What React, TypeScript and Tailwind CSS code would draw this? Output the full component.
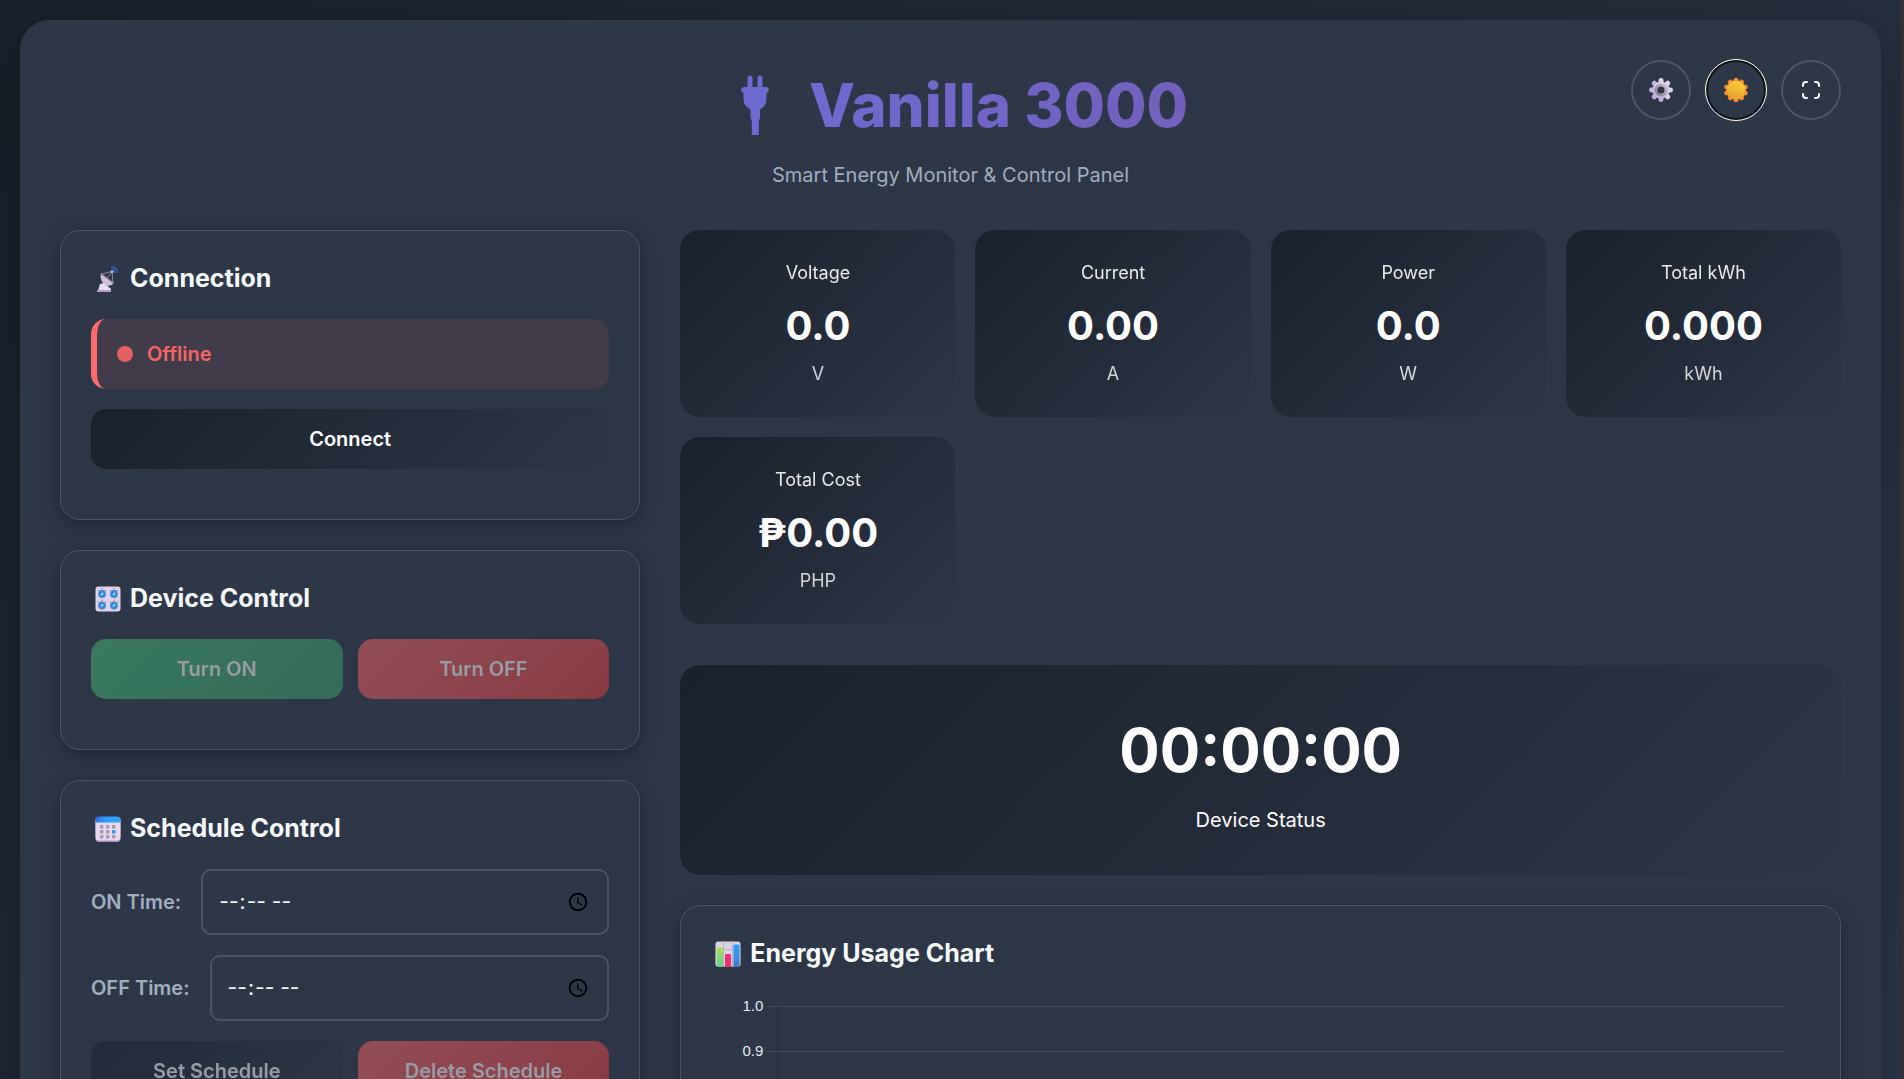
import { useState } from 'react';
import type { ReactNode } from 'react';

const STATS = [
  { label: 'Voltage', value: '0.0', unit: 'V' },
  { label: 'Current', value: '0.00', unit: 'A' },
  { label: 'Power', value: '0.0', unit: 'W' },
  { label: 'Total kWh', value: '0.000', unit: 'kWh' },
  { label: 'Total Cost', value: '₱0.00', unit: 'PHP' },
];

const TICKS = ['1.0', '0.9'];
const GEAR_TEETH = [0, 45, 90, 135];
const SUN_RAYS = [0, 36, 72, 108, 144, 180, 216, 252, 288, 324];

function PlugIcon() {
  return (
    <svg viewBox="0 0 28 60" className="h-[60px] w-7" fill="#6d6bd0" aria-hidden="true">
      <path d="M6.500 12V3a2.500 2.500 0 0 1 5 0v9h5V3a2.500 2.500 0 0 1 5 0v9h3.300a3.100 3.100 0 0 1 .7 6.100V24c0 4.500-2 8-6.500 10.300v8.200c0 1-.4 2-1.200 2.700V60h-7V45.200c-.8-.7-1.300-1.700-1.300-2.700v-8.200C5 32 2.500 28.500 2.500 24v-5.900A3.100 3.100 0 0 1 3.200 12z" />
    </svg>
  );
}

function GearIcon() {
  return (
    <svg viewBox="0 0 24 24" className="size-6" aria-hidden="true">
      <defs>
        <linearGradient id="gear" gradientUnits="userSpaceOnUse" x1="18" y1="0" x2="6" y2="24">
          <stop offset="0" stopColor="#e4dcee" />
          <stop offset="1" stopColor="#bba8d5" />
        </linearGradient>
        <linearGradient id="gearRing" x1="1" y1="0" x2="0" y2="1">
          <stop offset="0" stopColor="#c4bccb" />
          <stop offset="1" stopColor="#857c92" />
        </linearGradient>
      </defs>
      {GEAR_TEETH.map((a) => (
        <rect key={a} x="9.500" y="0" width="5" height="24" rx="2.400" fill="url(#gear)" transform={`rotate(${a} 12 12)`} />
      ))}
      <circle cx="12" cy="12" r="8.600" fill="url(#gear)" />
      <circle cx="12" cy="12" r="5" fill="#2d3748" stroke="url(#gearRing)" strokeWidth="3" />
    </svg>
  );
}

function SunIcon() {
  return (
    <svg viewBox="0 0 24 24" className="size-6" aria-hidden="true">
      <defs>
        <linearGradient id="sun" x1="0.700" y1="0" x2="0.300" y2="1">
          <stop offset="0" stopColor="#ffcf3a" />
          <stop offset="1" stopColor="#e0a02c" />
        </linearGradient>
      </defs>
      {SUN_RAYS.map((a) => (
        <circle key={a} cx="12" cy="2.200" r="2.400" fill="#fb8a2e" transform={`rotate(${a} 12 12)`} />
      ))}
      <circle cx="12" cy="12" r="10" fill="#fb8a2e" />
      <circle cx="12" cy="12" r="9.300" fill="url(#sun)" />
    </svg>
  );
}

function FullscreenIcon() {
  return (
    <svg viewBox="0 0 20 20" className="size-5" fill="none" stroke="#f7fafc" strokeWidth="2" strokeLinecap="round" aria-hidden="true">
      <path d="M2 6V5a3 3 0 0 1 3-3h1M14 2h1a3 3 0 0 1 3 3v1M18 14v1a3 3 0 0 1-3 3h-1M6 18H5a3 3 0 0 1-3-3v-1" />
    </svg>
  );
}

function DishIcon() {
  return (
    <svg viewBox="0 0 26 26" className="size-[26px]" aria-hidden="true">
      <path d="M5 18l4-1 7 6v2H3z" fill="#e6deee" />
      <path d="M2 24h14v2H2z" fill="#b39cc8" />
      <path d="M6 7.500C4.500 12 7 18 12 19.500c2.500.7 5-.3 6.500-2.500z" fill="#cfc0d6" />
      <path d="M6 7.500l12.500 9.500" stroke="#8d8096" strokeWidth="1.200" />
      <path d="M6.500 8L17 5.500 18 16.500M12 12l5-6" stroke="#8b8791" strokeWidth="1" fill="none" />
      <circle cx="17" cy="5.800" r="1.400" fill="#d5c9da" />
      <path d="M16 1c4 0 7 2.500 7 6M16.300 3.500c2.500 0 4 1.400 4 3.500" stroke="#2f62c8" strokeWidth="1.300" fill="none" />
    </svg>
  );
}

function KnobsIcon() {
  const knobs = [[7, 8], [19, 8], [7, 19.5], [19, 19.5]];
  return (
    <svg viewBox="0 0 26 26" className="size-[26px]" aria-hidden="true">
      <rect x="0.500" y="0.500" width="25" height="25" rx="3" fill="#e0d3ea" />
      {knobs.map(([x, y]) => (
        <g key={`${x}-${y}`}>
          <path d={`M${x - 4} ${y - 4}l1 1M${x} ${y - 6}v1.500M${x + 4} ${y - 4}l-1 1`} stroke="#6d6476" strokeWidth="0.900" />
          <circle cx={x} cy={y} r="3.900" fill="#3b8ad8" />
          <path d={`M${x - 1} ${y + 1}l2.200-2.200`} stroke="#bfe3ff" strokeWidth="1.200" />
        </g>
      ))}
    </svg>
  );
}

function CalendarIcon() {
  return (
    <svg viewBox="0 0 26 26" className="size-[26px]" aria-hidden="true">
      <defs>
        <linearGradient id="calTop">
          <stop offset="0" stopColor="#2f6be8" />
          <stop offset="0.400" stopColor="#2f9bff" />
          <stop offset="1" stopColor="#35a5fb" />
        </linearGradient>
      </defs>
      <rect x="0.500" y="1.500" width="25" height="24.500" rx="3.500" fill="#b08fc9" />
      <rect x="0.500" y="1" width="25" height="23.500" rx="3.500" fill="#e6d9ee" />
      <path d="M.5 6.500V4A3.500 3.500 0 0 1 4 .5h18A3.500 3.500 0 0 1 25.500 4v2.500z" fill="url(#calTop)" />
      {[9, 14, 19].map((y) =>
        [5, 11, 17].map((x) => (
          <rect key={`${x}-${y}`} x={x} y={y} width="3.400" height="3.400" rx="0.500" fill={x === 17 && y === 14 ? '#3095f2' : '#a698b0'} />
        ))
      )}
    </svg>
  );
}

function BarsIcon() {
  return (
    <svg viewBox="0 0 26 26" className="size-[26px]" aria-hidden="true">
      <defs>
        <linearGradient id="barGreen" x1="0" y1="0" x2="0" y2="1">
          <stop offset="0" stopColor="#a6e24a" />
          <stop offset="1" stopColor="#5bd68c" />
        </linearGradient>
        <linearGradient id="barBlue" x1="0" y1="0" x2="0" y2="1">
          <stop offset="0" stopColor="#2fa3f5" />
          <stop offset="1" stopColor="#3f7bd6" />
        </linearGradient>
      </defs>
      <rect x="0.500" y="0.500" width="25" height="25" rx="2.500" fill="#dcd3e2" />
      <path d="M8.500 0v26M17.500 0v26M0 8.500h26M0 17.500h26" stroke="#bdb0c6" strokeWidth="1" />
      <path d="M2 7.500q0-1 1-1h4q1 0 1 1V26H3q-1 0-1-1z" fill="url(#barGreen)" />
      <path d="M10 14q0-1 1-1h4q1 0 1 1v12h-6z" fill="#ec2f6f" />
      <path d="M18.500 4.500q0-1 1-1h4q1 0 1 1V25l-1 1h-5z" fill="url(#barBlue)" />
    </svg>
  );
}

function Card({ icon, title, children }: { icon: ReactNode; title: string; children: ReactNode }) {
  return (
    <section className="rounded-[20px] border border-[#4a5568] bg-[#2d3748] p-[30px] shadow-[0_5px_20px_rgba(0,0,0,0.3)]">
      <h2 className="mb-[22px] flex h-9 items-center gap-[9px] pl-1 text-[25px] font-bold text-[#f7fafc]">
        {icon}
        {title}
      </h2>
      {children}
    </section>
  );
}

function TimeField({ id, label, value, onChange }: { id: string; label: string; value: string; onChange: (v: string) => void }) {
  return (
    <div className="mb-5 flex items-center gap-5">
      <label htmlFor={id} className="text-xl font-semibold text-[#a0aec0]">{label}</label>
      <input
        id={id}
        type="time"
        value={value}
        onChange={(e) => onChange(e.target.value)}
        className="h-[66px] min-w-0 flex-1 rounded-[10px] border-2 border-[#4a5568] bg-[#2d3748] px-[15px] text-[21px] text-[#f7fafc]"
      />
    </div>
  );
}

const iconButton = 'flex size-[60px] items-center justify-center rounded-full border-2 border-[#4a5568] bg-[#2d3748]';
const button = 'h-[60px] flex-1 rounded-[15px] bg-linear-135 text-xl font-semibold text-white disabled:opacity-50';

export default function App() {
  const [connected, setConnected] = useState(false);
  const [onTime, setOnTime] = useState('');
  const [offTime, setOffTime] = useState('');

  return (
    <div className="h-screen overflow-y-auto border-r-[3px] border-[#323234] bg-linear-135 from-[#1a202c] to-[#2d3748] p-5 font-['Inter',sans-serif] [scrollbar-width:none]">
      <div className="relative rounded-[30px] bg-[#2d3748] p-10 shadow-[0_20px_60px_rgba(0,0,0,0.3)]">
        <div className="absolute top-10 right-10 flex gap-[15px]">
          <button aria-label="Settings" className={iconButton}><GearIcon /></button>
          <button aria-label="Toggle theme" className="flex size-[60px] items-center justify-center rounded-full border-2 border-[#101010] bg-[#2d3748] outline-1 outline-white">
            <SunIcon />
          </button>
          <button aria-label="Fullscreen" className={iconButton}><FullscreenIcon /></button>
        </div>

        <header className="mb-10 flex flex-col items-center text-center">
          <h1 className="mb-2.5 flex h-[90px] items-center text-[60px] font-extrabold">
            <span className="flex w-24 pl-7"><PlugIcon /></span>
            <span className="bg-linear-to-r from-[#6e6acf] to-[#7360bc] bg-clip-text text-transparent">Vanilla 3000</span>
          </h1>
          <p className="text-xl leading-[30px] text-[#a0aec0]">Smart Energy Monitor &amp; Control Panel</p>
        </header>

        <div className="grid grid-cols-[1fr_2fr] items-start gap-10">
          <div className="flex min-w-0 flex-col gap-[30px]">
            <Card icon={<DishIcon />} title="Connection">
              <div className="mb-5 flex h-[70px] items-center gap-3.5 rounded-[15px] border-l-6 border-[#ff6b6b] bg-[#f56565]/10 px-5 text-xl font-semibold text-[#f56565]">
                <span className="size-4 rounded-full bg-[#e36060]" />
                {connected ? 'Online' : 'Offline'}
              </div>
              <div className="mb-5 flex">
                <button onClick={() => setConnected(!connected)} className={`${button} from-[#1a202c] to-[#2d3748]`}>
                  {connected ? 'Disconnect' : 'Connect'}
                </button>
              </div>
            </Card>

            <Card icon={<KnobsIcon />} title="Device Control">
              <div className="mb-5 flex gap-[15px]">
                <button disabled={!connected} className={`${button} from-[#48bb78] to-[#38a169]`}>Turn ON</button>
                <button disabled={!connected} className={`${button} from-[#f56565] to-[#e53e3e]`}>Turn OFF</button>
              </div>
            </Card>

            <Card icon={<CalendarIcon />} title="Schedule Control">
              <TimeField id="on-time" label="ON Time:" value={onTime} onChange={setOnTime} />
              <TimeField id="off-time" label="OFF Time:" value={offTime} onChange={setOffTime} />
              <div className="mb-5 flex gap-[15px]">
                <button disabled={!connected} className={`${button} from-[#1a202c] to-[#2d3748]`}>Set Schedule</button>
                <button disabled={!connected} className={`${button} from-[#f56565] to-[#e53e3e]`}>Delete Schedule</button>
              </div>
            </Card>
          </div>

          <div className="min-w-0">
            <div className="mb-[41px] grid grid-cols-4 gap-5">
              {STATS.map((s) => (
                <div key={s.label} className="rounded-[20px] bg-linear-135 from-[#1a202c] to-[#2d3748] px-5 py-[30px] text-center text-white">
                  <div className="text-lg leading-[26px] opacity-90">{s.label}</div>
                  <div className="mt-3 mb-2 text-[40px] leading-[55px] font-bold">{s.value}</div>
                  <div className="text-lg leading-[26px] opacity-80">{s.unit}</div>
                </div>
              ))}
            </div>

            <div className="mb-[30px] rounded-[20px] bg-linear-135 from-[#1a202c] to-[#2d3748] p-10 text-center text-white">
              <div className="mb-2.5 text-[60px] leading-[90px] font-bold">00:00:00</div>
              <div className="text-xl leading-[30px]">Device Status</div>
            </div>

            <Card icon={<BarsIcon />} title="Energy Usage Chart">
              <div className="pt-0.5 pr-6 pl-7 font-['Liberation_Sans',Arial,sans-serif] text-[15px] text-[#e6eaf0]">
                {TICKS.map((t) => (
                  <div key={t} className="flex h-[45px] items-start">
                    <span className="w-6 text-right leading-5">{t}</span>
                    <span className="mt-2.5 ml-1 h-px w-2.5 bg-white/10" />
                    <span className="mt-2.5 h-[45px] flex-1 border-t border-l border-t-white/10 border-l-black/15" />
                  </div>
                ))}
              </div>
            </Card>
          </div>
        </div>
      </div>
    </div>
  );
}
